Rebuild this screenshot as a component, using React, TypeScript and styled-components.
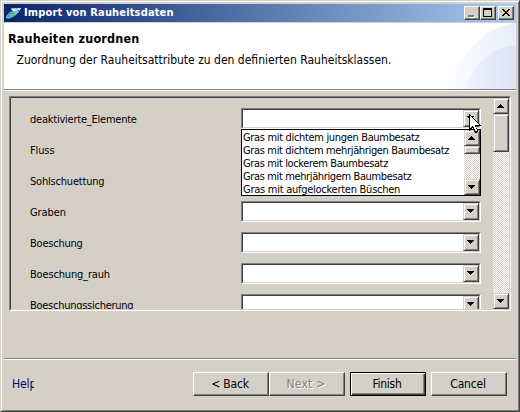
import React from 'react';
import styled, { createGlobalStyle, css } from 'styled-components';

const FACE = '#d4d0c8';
const SHADOW = '#808080';
const DARK = '#404040';

const GlobalStyle = createGlobalStyle`
  * { box-sizing: border-box; }
  body { margin: 0; background: ${FACE}; }
`;

const raised = css`
  background: ${FACE};
  border: 1px solid;
  border-color: ${FACE} ${DARK} ${DARK} ${FACE};
  box-shadow: inset 1px 1px #fff, inset -1px -1px ${SHADOW};
`;

const sunken = css`
  border: 1px solid;
  border-color: ${SHADOW} #fff #fff ${SHADOW};
`;

const sunkenInner = css`
  border: 1px solid;
  border-color: ${DARK} ${FACE} ${FACE} ${DARK};
`;

const Window = styled.div`
  width: 520px;
  height: 412px;
  padding: 3px 3px 2px;
  border: 1px solid;
  border-color: ${FACE} ${DARK} ${DARK} ${FACE};
  box-shadow: inset 1px 1px #fff, inset -1px -1px ${SHADOW};
  background: ${FACE};
  display: flex;
  flex-direction: column;
  overflow: hidden;
  font: 11px/13px 'DejaVu Sans Condensed', 'DejaVu Sans', sans-serif;
  color: #000;
  cursor: default;
`;

const TitleBar = styled.header`
  flex: none;
  height: 18px;
  padding: 0 2px;
  display: flex;
  align-items: center;
  background: linear-gradient(90deg, #0a246a, #a6caf0);
`;

const Title = styled.h1`
  flex: 1;
  margin: 0 0 0 2px;
  font: bold 11px/18px 'DejaVu Sans Condensed', sans-serif;
  letter-spacing: 0.15px;
  color: #fff;
  white-space: nowrap;
`;

const WindowButtons = styled.div`
  display: flex;
  & > :last-child { margin-left: 2px; }
`;

const WindowButton = styled.button`
  display: block;
  width: 16px;
  height: 14px;
  padding: 0;
  ${raised}
  border-color: #fff ${DARK} ${DARK} #fff;
  box-shadow: inset -1px -1px ${SHADOW};
  svg { display: block; }
`;

const Banner = styled.section`
  flex: none;
  display: flex;
  justify-content: space-between;
  height: 68px;
  margin-top: 1px;
  background: #fff;
  border-bottom: 1px solid #fff;
  box-shadow: inset 0 -1px ${SHADOW};
`;

const BannerText = styled.div`
  padding: 8px 0 0 4px;
  white-space: nowrap;
`;

const Heading = styled.h2`
  margin: 0;
  font: bold 12.5px/15px 'DejaVu Sans Condensed', sans-serif;
  letter-spacing: 0.18px;
`;

const Description = styled.p`
  margin: 7px 0 0 8.5px;
  font-size: 12px;
  line-height: 15px;
`;

const Swoosh = styled.svg`
  display: block;
  width: 76px;
  height: 66px;
  margin-left: -20px;
`;

const Content = styled.main`
  flex: 1;
  padding: 5px;
`;

const Panel = styled.div`
  width: 502px;
  height: 215px;
  ${sunken}
`;

const PanelInner = styled.div`
  height: 100%;
  display: flex;
  ${sunkenInner}
`;

const Rows = styled.div`
  flex: 1;
  overflow: hidden;
  padding: 10px 0 0 19px;
`;

const Row = styled.div`
  display: flex;
  height: 31px;
`;

const Label = styled.label<{ $spacing: number }>`
  width: 211px;
  padding-top: 5px;
  letter-spacing: ${(p) => p.$spacing}px;
  white-space: nowrap;
`;

const Combo = styled.div`
  position: relative;
  width: 240px;
  height: 21px;
  ${sunken}
`;

const ComboField = styled.div`
  display: flex;
  justify-content: flex-end;
  height: 100%;
  background: #fff;
  ${sunkenInner}
`;

const ArrowButton = styled.button<{ $h?: number }>`
  flex: none;
  display: flex;
  align-items: flex-start;
  justify-content: flex-start;
  width: 16px;
  height: ${(p) => p.$h ?? 16}px;
  padding: 5px 0 0 3px;
  ${raised}
`;

const ScrollTrack = styled.div`
  flex: none;
  display: flex;
  flex-direction: column;
  width: 16px;
  height: 100%;
  background: repeating-conic-gradient(#fff 0 25%, ${FACE} 0 50%) 0 0 / 2px 2px;
  & > :last-child { margin-top: auto; }
`;

const Thumb = styled.div<{ $h: number }>`
  height: ${(p) => p.$h}px;
  ${raised}
`;

const DropList = styled.div`
  position: absolute;
  z-index: 2;
  top: 20px;
  left: -1px;
  width: 240px;
  height: 67px;
  display: flex;
  background: #fff;
  border: 1px solid #000;
`;

const Options = styled.ul`
  flex: 1;
  margin: 0;
  padding: 1px 0 0 1px;
  list-style: none;
  white-space: nowrap;
`;

const Option = styled.li<{ $spacing: number }>`
  height: 13px;
  letter-spacing: ${(p) => p.$spacing}px;
`;

const Pointer = styled.svg`
  position: absolute;
  z-index: 3;
  left: 227px;
  top: 5px;
`;

const Footer = styled.footer`
  flex: none;
  display: flex;
  height: 51px;
  padding: 13px 9px 0 8px;
  border-top: 1px solid ${SHADOW};
  box-shadow: inset 0 1px #fff;
  font-size: 12px;
`;

const HelpLink = styled.a`
  width: 22px;
  height: 20px;
  margin-right: auto;
  padding-top: 6px;
  overflow: hidden;
  color: #00007f;
  letter-spacing: -0.1px;
`;

const PushButton = styled.button<{ $gap?: number; $spacing?: number; $primary?: boolean }>`
  width: 76px;
  height: 24px;
  margin-left: ${(p) => p.$gap ?? 0}px;
  padding: 1px 2px 0 0;
  font: 12px/15px 'DejaVu Sans Condensed', sans-serif;
  letter-spacing: ${(p) => p.$spacing ?? 0}px;
  color: #000;
  background: ${FACE};
  border: 1px solid;
  border-color: #fff ${DARK} ${DARK} #fff;
  box-shadow: inset -1px -1px ${SHADOW};
  ${(p) =>
    p.$primary &&
    css`
      border-color: #000;
      box-shadow: inset 1px 1px #fff, inset -1px -1px ${DARK}, inset -2px -2px ${SHADOW};
    `}
  &:disabled {
    color: ${SHADOW};
    text-shadow: 1px 1px #fff;
  }
`;

const Arrow = ({ up = false }: { up?: boolean }) => (
  <svg width="7" height="4" viewBox="0 0 7 4" shapeRendering="crispEdges">
    <path d={up ? 'M3 0h1v1h1v1h1v1h1v1H0V3h1V2h1V1h1z' : 'M0 0h7v1H6v1H5v1H4v1H3V3H2V2H1V1H0z'} />
  </svg>
);

const ScrollBar = ({ thumb }: { thumb: number }) => (
  <ScrollTrack>
    <ArrowButton><Arrow up /></ArrowButton>
    <Thumb $h={thumb} />
    <ArrowButton><Arrow /></ArrowButton>
  </ScrollTrack>
);

const AppIcon = () => (
  <svg width="16" height="16" viewBox="0 0 16 16">
    <path d="M6 3.5L15 3l-1 2-2 3-2 1-2-3-3-1z" fill="#8fd4f4" />
    <path d="M5 3.5h5L9 5l2 0-1 2-3-1z" fill="#e8f8ff" />
    <path d="M0 12l1-2 3-3 4-1 4-1-1 4-4 3-4 1.5-3-.2z" fill="#6cc5ec" />
    <path d="M1 11.5L3 9l3-1.5 3 .5-2 3-3 1.5z" fill="#2494bd" />
    <path d="M3 11l2-2 3-.5L6.500 11 4 12z" fill="#86c860" />
    <path d="M11 3.500h4l-2 1.500z" fill="#fff" />
    <path d="M12 5h1v1h-1z" fill="#174d98" />
  </svg>
);

const labels: [string, number][] = [
  ['deaktivierte_Elemente', -0.23],
  ['Fluss', -0.12],
  ['Sohlschuettung', -0.2],
  ['Graben', -0.08],
  ['Boeschung', -0.23],
  ['Boeschung_rauh', -0.17],
  ['Boeschungssicherung', -0.27],
];

const options: [string, number][] = [
  ['Gras mit dichtem jungen Baumbesatz', -0.33],
  ['Gras mit dichtem mehrjährigen Baumbesatz', -0.35],
  ['Gras mit lockerem Baumbesatz', -0.37],
  ['Gras mit mehrjährigem Baumbesatz', -0.37],
  ['Gras mit aufgelockerten Büschen', -0.26],
];

export default function App() {
  return (
    <Window>
      <GlobalStyle />
      <TitleBar>
        <AppIcon />
        <Title>Import von Rauheitsdaten</Title>
        <WindowButtons>
          <WindowButton aria-label="Minimize">
            <svg width="14" height="12" shapeRendering="crispEdges">
              <path d="M4 9h6v2H4z" fill="#fff" />
              <path d="M3 8h6v2H3z" fill="#808080" />
            </svg>
          </WindowButton>
          <WindowButton aria-label="Maximize">
            <svg width="14" height="12" shapeRendering="crispEdges">
              <path d="M2 1h9v9H2zM3 3v6h7V3z" fillRule="evenodd" />
            </svg>
          </WindowButton>
          <WindowButton aria-label="Close">
            <svg width="14" height="12" shapeRendering="crispEdges">
              <path d="M3 2h2v1h1v1h2V3h1V2h2v1h-1v1H9v1H8v1h1v1h1v1h1v1H9V8H8V7H6v1H5v1H3V8h1V7h1V6h1V5H5V4H4V3H3z" />
            </svg>
          </WindowButton>
        </WindowButtons>
      </TitleBar>
      <Banner>
        <BannerText>
          <Heading>Rauheiten zuordnen</Heading>
          <Description>Zuordnung der Rauheitsattribute zu den definierten Rauheitsklassen.</Description>
        </BannerText>
        <Swoosh viewBox="0 0 76 66">
          <defs>
            <linearGradient id="outer">
              <stop offset="0" stopColor="#fdfeff" />
              <stop offset="0.45" stopColor="#f3f6fd" />
              <stop offset="1" stopColor="#e8edf9" />
            </linearGradient>
            <linearGradient id="inner">
              <stop offset="0" stopColor="#eef2fb" />
              <stop offset="1" stopColor="#dbe2f6" />
            </linearGradient>
          </defs>
          <path d="M76 0C58 2 48 9 37 19C23 32 12 47 5 66H76z" fill="url(#outer)" />
          <path d="M76 22C50 25 32 42 26 66H76z" fill="url(#inner)" />
        </Swoosh>
      </Banner>
      <Content>
        <Panel>
          <PanelInner>
            <Rows>
              {labels.map(([text, spacing], i) => (
                <Row key={text}>
                  <Label $spacing={spacing}>{text}</Label>
                  <Combo>
                    <ComboField>
                      <ArrowButton $h={17}><Arrow /></ArrowButton>
                    </ComboField>
                    {i === 0 && (
                      <>
                        <DropList>
                          <Options>
                            {options.map(([name, gap]) => (
                              <Option key={name} $spacing={gap}>{name}</Option>
                            ))}
                          </Options>
                          <ScrollBar thumb={8} />
                        </DropList>
                        <Pointer width="12" height="19" viewBox="0 0 12 19" shapeRendering="crispEdges">
                          <path d="M0 0h1v1h1v1h1v1h1v1h1v1h1v1h1v1h1v1h1v1h1v1h1v1h1v1H7v2h1v2h1v2H8v1H6v-1H5v-2H4v-2H3v1H2v1H1v1H0z" />
                          <path d="M1 2h1v1h1v1h1v1h1v1h1v1h1v1h1v1h1v1h1v1H6v2h1v2h1v2H6v-2H5v-2H4v-1H3v1H2v1H1z" fill="#fff" />
                        </Pointer>
                      </>
                    )}
                  </Combo>
                </Row>
              ))}
            </Rows>
            <ScrollBar thumb={38} />
          </PanelInner>
        </Panel>
      </Content>
      <Footer>
        <HelpLink>Help</HelpLink>
        <PushButton $spacing={-0.2}>&lt; Back</PushButton>
        <PushButton $spacing={0.2} disabled>Next &gt;</PushButton>
        <PushButton $gap={5} $spacing={-0.25} $primary>Finish</PushButton>
        <PushButton $gap={5} $spacing={-0.2}>Cancel</PushButton>
      </Footer>
    </Window>
  );
}
